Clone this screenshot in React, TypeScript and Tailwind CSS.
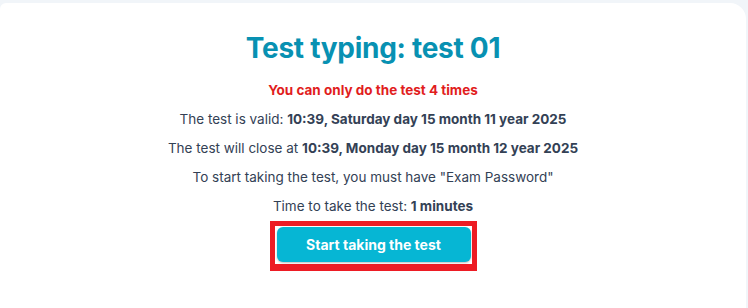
export default function App() {
  return (
    <div className="min-h-screen bg-[#f1f5f9] pt-[3px] pr-[2px]" style={{ fontFamily: 'Inter, "Noto Sans", sans-serif' }}>
      <div className="bg-white rounded-tr-2xl rounded-tl-md h-[305px] flex flex-col items-center">
        {/* Title */}
        <h1 className="mt-[27px] text-[28px] leading-[36px] font-bold text-[#0891b2] tracking-[-0.01em]">
          Test typing: test 01
        </h1>

        {/* Info */}
        <div className="mt-[14px] flex flex-col items-center gap-[9px] text-[13.5px] leading-[20px] text-[#334155]">
          <p className="font-bold text-[#e11d1d]">You can only do the test 4 times</p>
          <p>
            The test is valid: <span className="font-bold">10:39, Saturday day 15 month 11 year 2025</span>
          </p>
          <p>
            The test will close at <span className="font-bold">10:39, Monday day 15 month 12 year 2025</span>
          </p>
          <p>To start taking the test, you must have "Exam Password"</p>
          <p>
            Time to take the test: <span className="font-bold">1 minutes</span>
          </p>
        </div>

        {/* Action */}
        <div className="mt-[5px] border-[5px] border-b-[7px] border-[#ed1c24] pt-px pb-[2px] pl-[2px] pr-px">
          <button className="block w-[194px] h-[35px] rounded-md bg-[#06b6d4] text-white text-[14px] font-bold shadow-[0_1px_2px_rgba(0,0,0,0.25)]">
            Start taking the test
          </button>
        </div>
      </div>
    </div>
  )
}
